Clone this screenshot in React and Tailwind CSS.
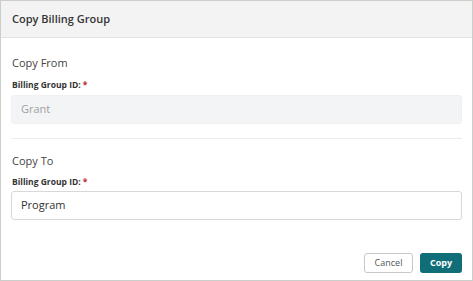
export default function App() {
  const font = { fontFamily: '"Open Sans", "Noto Sans", sans-serif' };
  return (
    <div style={font} className="w-[473px] h-[281px] bg-white border border-[#cbcfcb] flex flex-col">
      <div className="h-[37px] shrink-0 bg-[#f3f3f3] border-b border-[#e2e2e2] flex items-center px-[11px]">
        <span className="text-[11px] font-semibold text-[#333]">Copy Billing Group</span>
      </div>
      <div className="flex-1 flex flex-col px-[10px]">
        <div className="mt-[17px] text-[11px] leading-[15px] text-[#444] pl-[1px]">Copy From</div>
        <div className="mt-[9px] text-[8.5px] leading-[12px] font-bold text-[#333] pl-[1px]">
          Billing Group ID:<span className="text-[#c0282d] ml-[2px]">*</span>
        </div>
        <div className="mt-[4px] h-[29px] rounded-[3px] bg-[#f3f4f5] border border-[#eef0f1] flex items-center px-[9px] text-[11px] text-[#a0a0a0]">
          Grant
        </div>
        <div className="mt-[14px] h-px bg-[#ececec]" />
        <div className="mt-[14px] text-[11px] leading-[15px] text-[#444] pl-[1px]">Copy To</div>
        <div className="mt-[8px] text-[8.5px] leading-[12px] font-bold text-[#333] pl-[1px]">
          Billing Group ID:<span className="text-[#c0282d] ml-[2px]">*</span>
        </div>
        <div className="mt-[3px] h-[29px] rounded-[3px] bg-white border border-[#d8d8d8] flex items-center px-[9px] text-[11px] text-[#333]">
          Program
        </div>
        <div className="mt-auto mb-[7px] flex justify-end gap-[7px]">
          <button className="h-[20px] w-[49px] rounded-[3px] border border-[#c8c8c8] bg-white text-[9px] text-[#555] flex items-center justify-center">
            Cancel
          </button>
          <button className="h-[20px] w-[42px] rounded-[3px] bg-[#0f6e77] text-[9px] font-bold text-white flex items-center justify-center">
            Copy
          </button>
        </div>
      </div>
    </div>
  );
}
